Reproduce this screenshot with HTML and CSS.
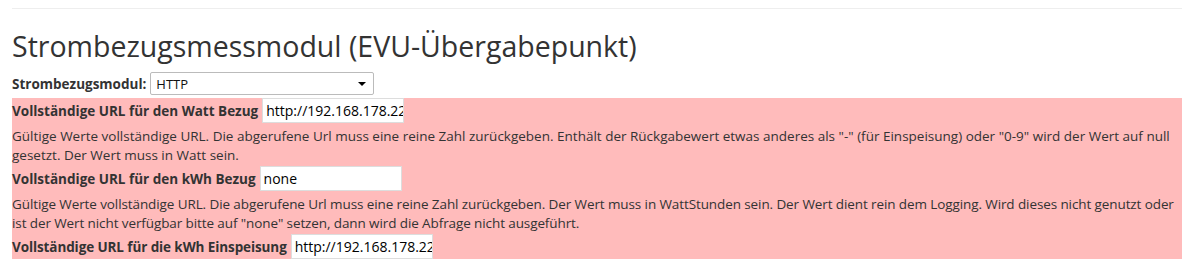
FILE: index.html
```html
<!DOCTYPE html>
<html lang="de">
<head>
<meta charset="utf-8">
<link rel="stylesheet" href="styles.css">
</head>
<body>
<div class="container">
  <hr class="rule">
  <h1 class="title">Strombezugsmessmodul (EVU-Übergabepunkt)</h1>
  <div class="select-row">
    <label class="lbl">Strombezugsmodul:</label>
    <div class="select"><span>HTTP</span><span class="caret"></span></div>
  </div>
  <div class="panel">
    <div class="row">
      <label class="lbl">Vollständige URL für den Watt Bezug</label>
      <div class="input">http://192.168.178.22</div>
    </div>
    <div class="desc">Gültige Werte vollständige URL. Die abgerufene Url muss eine reine Zahl zurückgeben. Enthält der Rückgabewert etwas anderes als "-" (für Einspeisung) oder "0-9" wird der Wert auf null gesetzt. Der Wert muss in Watt sein.</div>
    <div class="row">
      <label class="lbl">Vollständige URL für den kWh Bezug</label>
      <div class="input">none</div>
    </div>
    <div class="desc desc-tight">Gültige Werte vollständige URL. Die abgerufene Url muss eine reine Zahl zurückgeben. Der Wert muss in WattStunden sein. Der Wert dient rein dem Logging. Wird dieses nicht genutzt oder ist der Wert nicht verfügbar bitte auf "none" setzen, dann wird die Abfrage nicht ausgeführt.</div>
    <div class="row">
      <label class="lbl lbl-tight">Vollständige URL für die kWh Einspeisung</label>
      <div class="input">http://192.168.178.22</div>
    </div>
  </div>
</div>
</body>
</html>
```

FILE: styles.css
```css
html, body {
  margin: 0;
  padding: 0;
  background: #fff;
}
body {
  font-family: "Open Sans", "Noto Sans", sans-serif;
  font-size: 13.5px;
  color: #333;
}
.container {
  padding: 0 12px;
}
.rule {
  margin: 8px 0 0 0;
  border: 0;
  border-top: 1px solid #eee;
  height: 0;
}
.title {
  margin: 18px 0 0 0;
  font-weight: 400;
  font-size: 28.5px;
  line-height: 38px;
  color: #333;
}
.select-row {
  display: flex;
  align-items: center;
  height: 25px;
  margin: 6px 0 2px 0;
}
.lbl {
  font-weight: 700;
  margin-right: 4px;
  white-space: nowrap;
}
.lbl-tight {
  letter-spacing: -0.1px;
}
.select {
  display: flex;
  align-items: center;
  justify-content: space-between;
  box-sizing: border-box;
  width: 224px;
  height: 23px;
  border: 1px solid #bbb;
  border-radius: 2px;
  padding: 0 7px 0 5px;
  color: #111;
  font-size: 13px;
  background: #fff;
}
.caret {
  width: 0;
  height: 0;
  border-left: 4px solid transparent;
  border-right: 4px solid transparent;
  border-top: 4px solid #000;
}
.panel {
  background: #ffbbbb;
}
.row {
  display: flex;
  align-items: center;
  height: 25px;
}
.input {
  box-sizing: border-box;
  width: 142px;
  height: 25px;
  border: 1px solid #ddd;
  background: #fff;
  padding: 2px 3px 0 3px;
  overflow: hidden;
  white-space: nowrap;
  font-size: 14px;
  line-height: 20px;
  color: #000;
}
.desc {
  line-height: 19px;
  padding: 4px 0 1px 0;
}
.desc-tight {
  letter-spacing: -0.1px;
}
```
